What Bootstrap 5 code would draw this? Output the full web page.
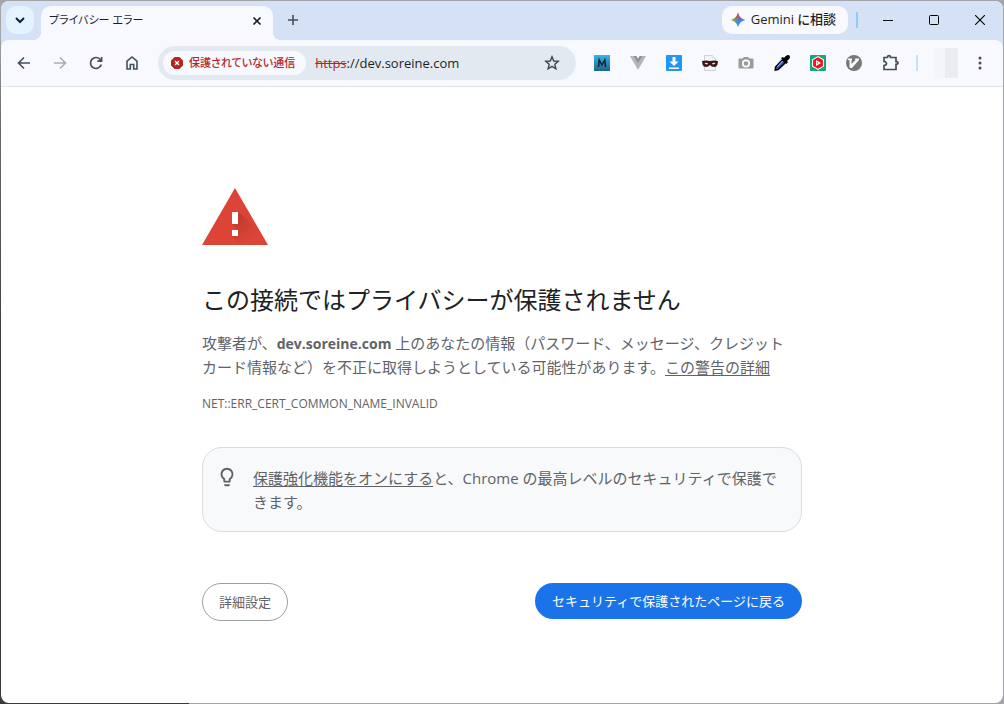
<!DOCTYPE html>
<html lang="ja">
<head>
<meta charset="utf-8">
<meta name="viewport" content="width=device-width, initial-scale=1">
<title>プライバシー エラー</title>
<link href="https://cdn.jsdelivr.net/npm/bootstrap@5.3.0/dist/css/bootstrap.min.css" rel="stylesheet">
<style>
  body {
    font-family: "Noto Sans", "Noto Sans CJK JP", sans-serif;
    background:
      linear-gradient(#a3a4a8, #a3a4a8) right / calc(100% - 189px) 100% no-repeat,
      linear-gradient(#a3a4a8 0, #a3a4a8 35px, #6b6c70 120px, #3a3a3c 360px);
    color: #5f6368;
  }
  .browser { border-radius: 8px; margin: 1px; }
  .chrome-ui { font-family: "Open Sans", "Noto Sans CJK JP", sans-serif; font-size: 12px; color: #1f1f1f; }
  .narrow-kana { font-feature-settings: "palt"; }
  .tab-strip { background: #d5e2f6; height: 47px; margin-bottom: -8px; padding: 5px 0 8px 5px; }
  .plain { border: 0; background: none; padding: 0; display: flex; align-items: center; justify-content: center; flex: none; color: inherit; }
  .tab-search { width: 28px; height: 28px; border-radius: 10px; background: #e5f2ff; }
  .page-tab { width: 232px; margin-left: 7px; padding: 0 9px 5px 8px; background: #f8f9ff; border-radius: 10px 10px 0 0; height: 34px; font-size: 11px; }
  .page-tab::before, .page-tab::after { content: ""; position: absolute; bottom: 0; width: 8px; height: 8px; }
  .page-tab::before { left: -8px; background: radial-gradient(circle at 0 0, transparent 8px, #f8f9ff 8px); }
  .page-tab::after { right: -8px; background: radial-gradient(circle at 100% 0, transparent 8px, #f8f9ff 8px); }
  .tab-close { width: 14px; height: 16px; }
  .new-tab { width: 40px; height: 28px; }
  .gemini { height: 28px; padding: 0 12px 0 8px; gap: 5px; border-radius: 10px; background: #f8f9ff; font-size: 13px; font-weight: 500; }
  .divider { width: 2px; height: 16px; background: #90caf9; flex: none; }
  .divider-strip { margin: 6px 7px 0 8px; }
  .divider-soft { background: #c7e2fb; margin: 0 16px 0 8px; }
  .win-btn { width: 46px; height: 28px; }
  .toolbar { background: #f8f9ff; height: 47px; padding: 0 5px; border-bottom: 1px solid #dfe3ea; border-radius: 8px 8px 0 0; color: #41505e; }
  .tool { width: 36px; height: 34px; }
  .omnibox { background: #e2e9f1; height: 34px; border-radius: 17px; margin: 0 8px; padding: 0 6px 0 5px; }
  .chip { height: 24px; border-radius: 12px; background: #f8f9ff; padding: 0 11px 0 8px; gap: 6px; color: #b3261e; font-size: 11px; font-weight: 500; }
  .address { font-size: 13px; color: #1f1f1f; padding: 1px 0 0 9px; }
  .address s { color: #b3261e; }
  .avatar { width: 24px; height: 30px; background: linear-gradient(90deg, #f3f5fb 46%, #e9ecf1 46%); }
  .interstitial { max-width: 600px; padding-top: 101px; padding-bottom: 81px; }
  .headline { font-size: 24px; line-height: 30px; font-weight: 400; color: #202124; margin: 40px 0 16px; }
  .body-text { font-family: "Open Sans", "Noto Sans CJK JP", sans-serif; font-size: 15px; line-height: 24px; line-break: strict; }
  .body-text strong { font-size: 14px; line-height: 16px; }
  .body-text a { color: inherit; text-decoration: underline; text-underline-offset: 2px; text-decoration-thickness: 1px; }
  .error-code { font-family: "Open Sans", "Noto Sans CJK JP", sans-serif; font-size: 12px; line-height: 20px; margin: 15px 0 33px; }
  .promo { border: 1px solid #dadce0; border-radius: 20px; background: #f8f9fb; padding: 18px 16px 17px 13px; gap: 15px; }
  .actions { margin-top: 51px; }
  .pill { font-size: 13px; line-height: 20px; border-radius: 20px; padding: 8px 16px; }
  .pill-outline { border: 1px solid #9aa0a6; color: #5f6368; background: #fff; }
  .pill-blue { border: 0; background: #1a73e8; color: #fff; padding: 8px 17px; }
</style>
</head>
<body class="min-vh-100 d-flex p-0">
<div class="browser bg-white flex-grow-1 overflow-hidden d-flex flex-column">

  <header class="chrome-ui">
    <div class="tab-strip d-flex align-items-start">
      <button class="plain tab-search" aria-label="タブを検索">
        <svg width="12" height="12" viewBox="0 0 12 12" fill="none" stroke="#0d2538" stroke-width="2"><path d="M2 4l4 4 4-4"/></svg>
      </button>
      <div class="page-tab position-relative d-flex align-items-center justify-content-between">
        <span class="narrow-kana text-nowrap">プライバシー エラー</span>
        <button class="plain tab-close" aria-label="タブを閉じる">
          <svg width="10" height="10" viewBox="0 0 10 10" stroke="#1f1f1f" stroke-width="1.7"><path d="M1.5 1.5l7 7m0-7l-7 7"/></svg>
        </button>
      </div>
      <button class="plain new-tab" aria-label="新しいタブ">
        <svg width="12" height="12" viewBox="0 0 12 12" stroke="#41505e" stroke-width="1.6"><path d="M6 1v10M1 6h10"/></svg>
      </button>
      <button class="plain gemini narrow-kana ms-auto text-nowrap">
        <svg width="16" height="16" viewBox="0 0 16 16">
          <defs>
            <linearGradient id="spark" x1="0" y1="0" x2="1" y2="0"><stop offset="0" stop-color="#f4b400"/><stop offset=".3" stop-color="#55ab6b"/><stop offset=".55" stop-color="#3186ff"/></linearGradient>
            <linearGradient id="sparkTop" x1="0" y1="0" x2="0" y2="1"><stop offset="0" stop-color="#ea4335"/><stop offset=".3" stop-color="#ea4335" stop-opacity=".8"/><stop offset=".5" stop-color="#ea4335" stop-opacity="0"/></linearGradient>
          </defs>
          <path fill="url(#spark)" d="M8 .5c1 4.200 3 6.200 7.500 7.500C11 9.200 9 11.300 8 15.500 7 11.300 5 9.200.5 8 5 6.700 7 4.700 8 .5z"/>
          <path fill="url(#sparkTop)" d="M8 .5c1 4.200 3 6.200 7.500 7.500C11 9.200 9 11.300 8 15.500 7 11.300 5 9.200.5 8 5 6.700 7 4.700 8 .5z"/>
        </svg>
        <span>Gemini に相談</span>
      </button>
      <span class="divider divider-strip"></span>
      <button class="plain win-btn" aria-label="最小化"><svg width="10" height="10" stroke="#000"><path d="M0 5.500h10"/></svg></button>
      <button class="plain win-btn" aria-label="最大化"><svg width="10" height="10" fill="none" stroke="#000"><rect x=".5" y=".5" width="9" height="9" rx="1"/></svg></button>
      <button class="plain win-btn" aria-label="閉じる"><svg width="10" height="10" stroke="#000" stroke-width="1.100"><path d="M0 0l10 10M10 0L0 10"/></svg></button>
    </div>

    <nav class="toolbar position-relative d-flex align-items-center">
      <button class="plain tool" aria-label="戻る"><svg width="16" height="16" viewBox="0 0 16 16" fill="none" stroke="currentColor" stroke-width="1.600"><path d="M14 8H3M8 2.500L2.500 8 8 13.500"/></svg></button>
      <button class="plain tool" aria-label="進む"><svg width="16" height="16" viewBox="0 0 16 16" fill="none" stroke="#a9adb2" stroke-width="1.600"><path d="M2 8h11M8 2.500L13.500 8 8 13.500"/></svg></button>
      <button class="plain tool" aria-label="再読み込み"><svg width="16" height="16" viewBox="0 0 16 16" fill="none" stroke="currentColor" stroke-width="1.700"><path d="M13.300 9.500A5.500 5.500 0 1 1 12.500 4.800L13.600 6M13.600 2v4.200H9.400"/></svg></button>
      <button class="plain tool" aria-label="ホーム"><svg width="16" height="16" viewBox="0 0 16 16" fill="none" stroke="currentColor" stroke-width="1.600"><path d="M3 6.200L8 2l5 4.200V14H9.700V9.500H6.300V14H3z"/></svg></button>

      <div class="omnibox flex-grow-1 d-flex align-items-center">
        <button class="plain chip narrow-kana text-nowrap">
          <svg width="12" height="12" viewBox="0 0 12 12"><path fill="#b3261e" d="M3.600 0h4.800L12 3.600v4.800L8.400 12H3.600L0 8.400V3.600z"/><path stroke="#fff" stroke-width="1.400" d="M4 4l4 4M8 4L4 8"/></svg>
          <span>保護されていない通信</span>
        </button>
        <div class="address flex-grow-1" role="textbox" aria-label="アドレス"><s>https</s>://dev.soreine.com</div>
        <button class="plain tool" aria-label="ブックマークに追加"><svg width="16" height="16" viewBox="0 0 16 16" fill="none" stroke="#41454d" stroke-width="1.400"><path d="M8 1.800l1.700 4.200 4.500.4-3.400 2.900 1.100 4.500L8 11.400l-3.900 2.400 1.100-4.500L1.800 6.400l4.500-.4z"/></svg></button>
      </div>

      <button class="plain tool" aria-label="拡張機能 M"><svg width="16" height="16" viewBox="0 0 16 16"><defs><linearGradient id="mbg" x1="0" y1="0" x2="0" y2="1"><stop offset="0" stop-color="#35b4ec"/><stop offset="1" stop-color="#1b6788"/></linearGradient></defs><path fill="url(#mbg)" d="M0 0h16v16H0z"/><path fill="none" stroke="#10212b" stroke-width="1.500" d="M4.500 12l.7-7L8 10l2.800-5 .7 7"/></svg></button>
      <button class="plain tool" aria-label="Vue"><svg width="16" height="16" viewBox="0 0 16 16"><path fill="#b5b5b5" d="M0 1h3.500L8 8.700 12.500 1H16L8 15z"/><path fill="#8d8d8d" d="M3.500 1H6.400L8 3.800 9.600 1h2.900L8 8.800z"/></svg></button>
      <button class="plain tool" aria-label="ダウンロード"><svg width="16" height="16" viewBox="0 0 16 16"><rect width="16" height="16" rx="1" fill="#2196f3"/><path fill="#fff" d="M6.500 2h3v4.500h3L8 11 3.500 6.500h3zM3 12.500h10V14H3z"/></svg></button>
      <button class="plain tool" aria-label="マスク"><svg width="16" height="16" viewBox="0 0 16 16"><path fill="#f4f4f4" stroke="#d2d2d2" d="M2.500.5h8l3 3v12h-11z"/><path fill="#ddd" d="M10.500.5v3h3z"/><path fill="#3a1518" d="M0 6q4-1 8 0 4-1 8 0l-.5 3.500Q14.500 12 12 12q-2.500 0-4-2-1.500 2-4 2-2.500 0-3.500-2.500z"/><path fill="#eee" d="M2.500 8q2-1 3.700.8-2 1.600-3.700-.8zm11 0q-2-1-3.700.8 2 1.600 3.700-.8z"/></svg></button>
      <button class="plain tool" aria-label="スクリーンショット"><svg width="16" height="16" viewBox="0 0 16 16"><path fill="#9b9b9b" d="M1.500 3.500h3L6 2h4l1.500 1.500h3q1 0 1 1v8q0 1-1 1h-13q-1 0-1-1v-8q0-1 1-1z"/><circle cx="8" cy="8.500" r="3.200" fill="none" stroke="#fff" stroke-width="1.700"/></svg></button>
      <button class="plain tool" aria-label="スポイト"><svg width="16" height="16" viewBox="0 0 16 16"><path fill="#3657d9" stroke="#000" stroke-width="1.600" d="M8.300 4.800l3 3L4 14.500 1.300 15 1.600 12z"/><path stroke="#b9cafa" d="M3.500 11.500L8.500 6"/><path fill="#000" d="M7 3l2-1 1 1q2-3 4-3 2 0 2 2 0 2-3 4l1 1-1.500 2z"/></svg></button>
      <button class="plain tool" aria-label="動画"><svg width="16" height="16" viewBox="0 0 16 16"><rect width="16" height="16" rx="1" fill="#12a77c"/><path fill="#fff" d="M8 1l6 3.500v7L8 15l-6-3.500v-7z"/><path fill="#f5101a" d="M8 2.300l4.900 2.800v5.800L8 13.700l-4.900-2.800V5.100z"/><path fill="#fff" d="M6 5l5 3-5 3z"/><path fill="#f5101a" d="M7.200 7.200L8.600 8l-1.400.8z"/></svg></button>
      <button class="plain tool" aria-label="Vimium"><svg width="16" height="16" viewBox="0 0 16 16"><circle cx="8" cy="8" r="8" fill="#777"/><path fill="#f8f9ff" d="M2 3.500h4V5l-.5.300V9l4-4-.5-.5V3.500h4V5L6 13H4.200L3.500 12V5.300L2 5z"/></svg></button>
      <button class="plain tool" aria-label="拡張機能"><svg width="18" height="18" viewBox="0 0 18 18" fill="none" stroke="currentColor" stroke-width="1.700"><path d="M3 3.500h3.500q0-1.800 1.500-1.800t1.500 1.800H15V7.700q2 0 2 1.300t-2 1.300v5.200H3v-4q2.500-.3 2.500-2T3 7.500z"/></svg></button>
      <span class="divider divider-soft"></span>
      <span class="avatar flex-shrink-0"></span>
      <button class="plain tool ms-1" aria-label="メニュー"><svg width="4" height="14" viewBox="0 0 4 14" fill="currentColor"><circle cx="2" cy="2" r="1.500"/><circle cx="2" cy="7" r="1.500"/><circle cx="2" cy="12" r="1.500"/></svg></button>
    </nav>
  </header>

  <main class="interstitial w-100 mx-auto">
    <svg class="d-block" width="66" height="57" viewBox="0 0 66 57" role="img" aria-label="警告">
      <defs><linearGradient id="shade" x1="0" y1="0" x2="1" y2="1"><stop offset="0" stop-color="#b8382e"/><stop offset=".65" stop-color="#db4437"/></linearGradient></defs>
      <path fill="#db4437" d="M33 0l33 57H0z"/>
      <path fill="url(#shade)" d="M36 24l17 14 11 19H39l-9-9h6v-6l-6-6h6z"/>
      <path fill="#fff" d="M30 24h6v12h-6zM30 42h6v6h-6z"/>
    </svg>
    <h1 class="headline">この接続ではプライバシーが保護されません</h1>
    <p class="body-text mb-0">攻撃者が、<strong>dev.soreine.com</strong> 上のあなたの情報（パスワード、メッセージ、クレジットカード情報など）を不正に取得しようとしている可能性があります。<a href="#">この警告の詳細</a></p>
    <p class="error-code">NET::ERR_CERT_COMMON_NAME_INVALID</p>
    <div class="promo d-flex align-items-start">
      <svg class="flex-shrink-0" width="22" height="22" viewBox="0 0 24 24" fill="#5f6368"><path d="M9 21c0 .5.400 1 1 1h4c.6 0 1-.5 1-1v-1H9v1zm3-19C8.100 2 5 5.100 5 9c0 2.400 1.200 4.500 3 5.700V17c0 .5.400 1 1 1h6c.6 0 1-.5 1-1v-2.300c1.800-1.300 3-3.400 3-5.700 0-3.900-3.100-7-7-7zm2.900 11.100l-.9.600V16h-4v-2.300l-.9-.6A5 5 0 1 1 14.900 13.100z"/></svg>
      <p class="body-text mb-0"><a href="#">保護強化機能をオンにする</a>と、Chrome の最高レベルのセキュリティで保護できます。</p>
    </div>
    <div class="actions d-flex justify-content-between align-items-start">
      <button class="pill pill-outline">詳細設定</button>
      <button class="pill pill-blue">セキュリティで保護されたページに戻る</button>
    </div>
  </main>
</div>
<script src="https://cdn.jsdelivr.net/npm/bootstrap@5.3.0/dist/js/bootstrap.bundle.min.js"></script>
</body>
</html>
